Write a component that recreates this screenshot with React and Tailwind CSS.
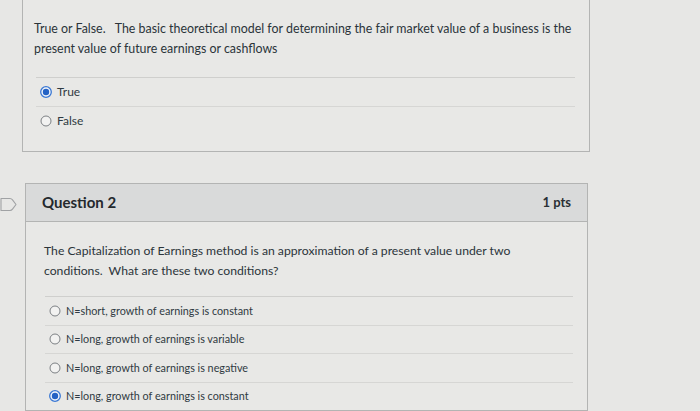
import React from "react";

const Radio = ({ checked }) =>
  checked ? (
    <svg width="12" height="12" viewBox="0 0 12 12" className="shrink-0">
      <circle cx="6" cy="6" r="5.3" fill="#f4f6fa" stroke="#3a78d4" strokeWidth="1.3" />
      <circle cx="6" cy="6" r="3.2" fill="#2462c4" />
    </svg>
  ) : (
    <svg width="12" height="12" viewBox="0 0 12 12" className="shrink-0">
      <circle cx="6" cy="6" r="5" fill="#f2f2f1" stroke="#7c8084" strokeWidth="1" />
    </svg>
  );

const Option = ({ label, checked, first, small }) => (
  <div
    className={`flex items-center gap-[5px] pl-[4px] ${
      small ? "h-[28.5px] text-[10.8px]" : "h-[29px] text-[12px]"
    } ${first ? "border-t border-[#cfcfcd]" : "border-t border-[#d6d6d4]"}`}
  >
    <Radio checked={checked} />
    <span className="text-[#2f3a42]">{label}</span>
  </div>
);

const App = () => {
  return (
    <div
      className="w-[700px] h-[411px] overflow-hidden bg-[#e7e7e5] text-[#2b343a]"
      style={{ fontFamily: "Lato, 'Open Sans', sans-serif" }}
    >
      {/* Question 1 */}
      <div className="ml-[22px] w-[568px] border-x border-b border-[#b3b4b3] bg-[#e8e8e6] pt-[19px] pb-[16px]">
        <p className="px-[11px] text-[12.4px] leading-[20px]">
          True or False.&nbsp;&nbsp; The basic theoretical model for determining the fair market value of a business is the
          present value of future earnings or cashflows
        </p>
        <div className="mt-[18px] ml-[13px] mr-[14px]">
          <Option label="True" checked first />
          <Option label="False" />
        </div>
      </div>

      {/* Question 2 */}
      <div className="mt-[31px] flex items-start">
        <svg width="18" height="16" viewBox="0 0 18 16" className="mt-[14px] shrink-0">
          <path
            d="M1 1.5 H10 Q11.5 1.5 12.5 2.8 L16 7.5 L12.5 12.2 Q11.5 13.5 10 13.5 H1 Z"
            fill="none"
            stroke="#a0a2a4"
            strokeWidth="1.1"
            strokeLinejoin="round"
          />
        </svg>
        <div className="ml-[7px] w-[563px] border border-[#b3b4b3] bg-[#e8e8e6]">
          <div className="flex h-[38px] items-center justify-between border-b border-[#b3b4b3] bg-[#d9dada] pl-[16px] pr-[16px]">
            <span className="text-[15px] font-bold text-[#24292d]">Question 2</span>
            <span className="text-[13px] font-bold text-[#2a3035]">1 pts</span>
          </div>
          <p className="pl-[18px] pr-[60px] pt-[19px] text-[12.2px] leading-[20px]">
            The Capitalization of Earnings method is an approximation of a present value under two
            conditions.&nbsp; What are these two conditions?
          </p>
          <div className="mt-[15px] ml-[19px] mr-[14px]">
            <Option small label="N=short, growth of earnings is constant" first />
            <Option small label="N=long, growth of earnings is variable" />
            <Option small label="N=long, growth of earnings is negative" />
            <Option small label="N=long, growth of earnings is constant" checked />
          </div>
        </div>
      </div>
    </div>
  );
};

export default App;
